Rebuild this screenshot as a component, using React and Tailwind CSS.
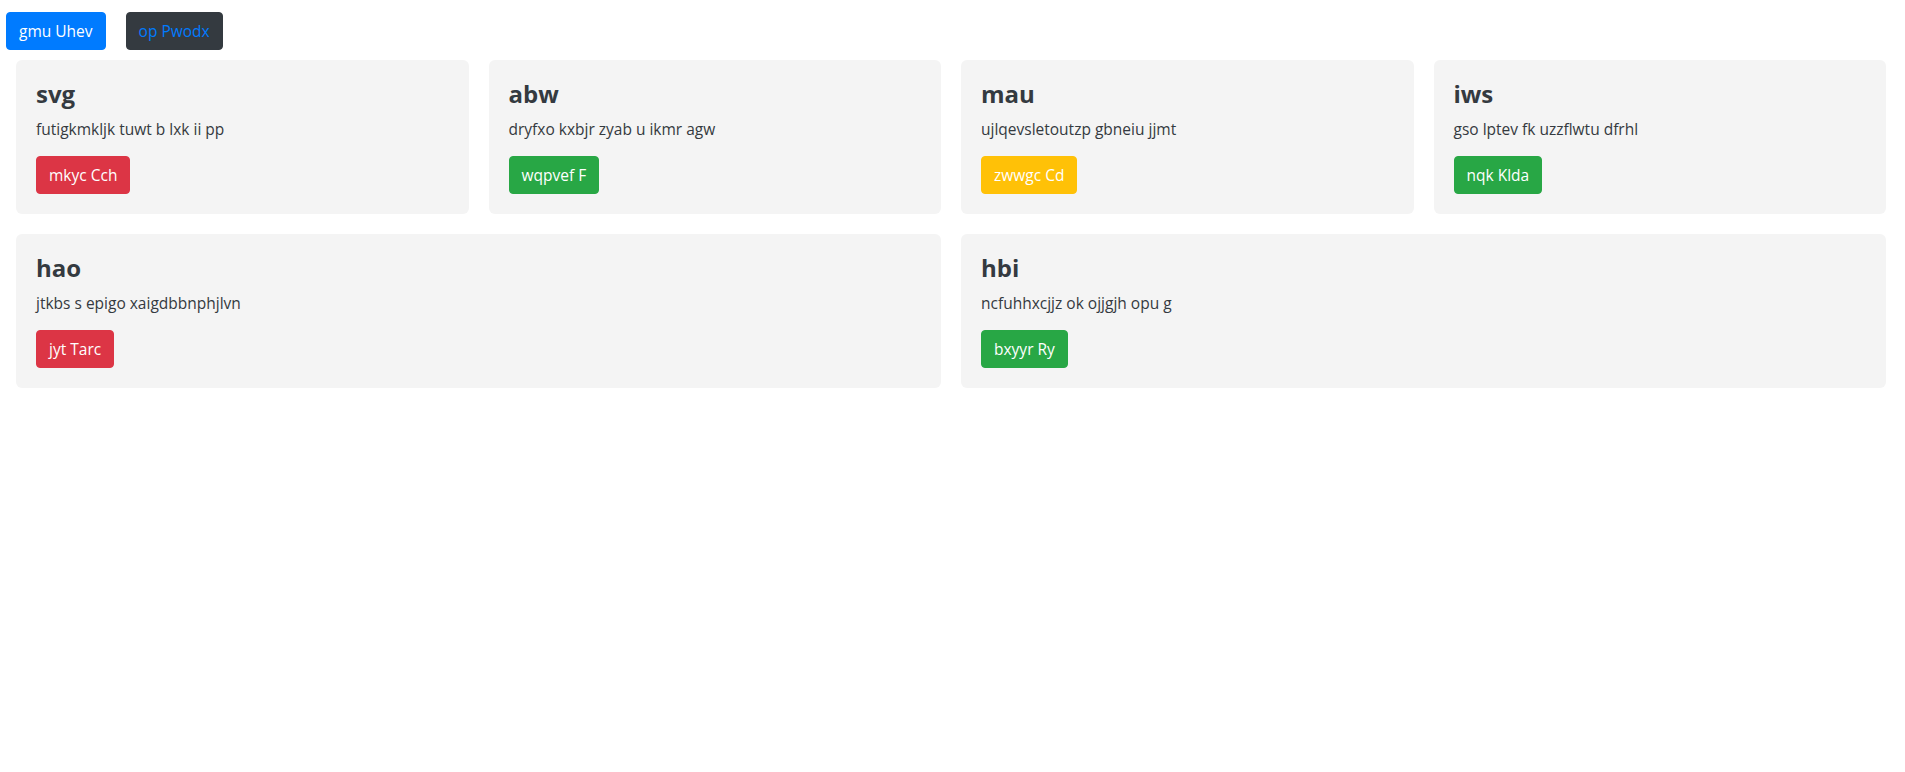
import React from "react";

const variants = {
  red: "bg-[#dc3545] border-[#dc3545]",
  green: "bg-[#28a745] border-[#28a745]",
  yellow: "bg-[#ffc107] border-[#ffc107]",
};

const cards = [
  { title: "svg", text: "futigkmkljk tuwt b lxk ii pp", btn: "mkyc Cch", color: "red" },
  { title: "abw", text: "dryfxo kxbjr zyab u ikmr agw", btn: "wqpvef F", color: "green" },
  { title: "mau", text: "ujlqevsletoutzp gbneiu jjmt", btn: "zwwgc Cd", color: "yellow" },
  { title: "iws", text: "gso lptev fk uzzflwtu dfrhl", btn: "nqk Klda", color: "green" },
];

const wideCards = [
  { title: "hao", text: "jtkbs s epigo xaigdbbnphjlvn", btn: "jyt Tarc", color: "red" },
  { title: "hbi", text: "ncfuhhxcjjz ok ojjgjh opu g", btn: "bxyyr Ry", color: "green" },
];

const Card = ({ card }) => (
  <div className="bg-[#f4f4f4] rounded-md p-5">
    <h3 className="text-[24px] leading-[1.2] font-bold text-[#343a40] mb-2">{card.title}</h3>
    <p className="text-[15.5px] leading-6 text-[#343a40] mb-[15px]">{card.text}</p>
    <button
      className={`${variants[card.color]} text-white text-[15.5px] leading-6 px-3 py-1.5 border rounded`}
    >
      {card.btn}
    </button>
  </div>
);

export default function App() {
  return (
    <div className="min-h-screen bg-white font-['Open_Sans',sans-serif]">
      <div className="flex gap-5 pl-[6px] pt-3">
        <button className="bg-[#007bff] border border-[#007bff] text-white text-[15.5px] leading-6 px-3 py-1.5 rounded">
          gmu Uhev
        </button>
        <button className="bg-[#343a40] border border-[#343a40] text-[#007bff] text-[15.5px] leading-6 px-3 py-1.5 rounded">
          op Pwodx
        </button>
      </div>
      <div className="pl-4 pr-[19px] pt-[10px]">
        <div className="grid grid-cols-4 gap-5">
          {cards.map((c) => (
            <Card key={c.title} card={c} />
          ))}
        </div>
        <div className="grid grid-cols-2 gap-5 mt-5">
          {wideCards.map((c) => (
            <Card key={c.title} card={c} />
          ))}
        </div>
      </div>
    </div>
  );
}
